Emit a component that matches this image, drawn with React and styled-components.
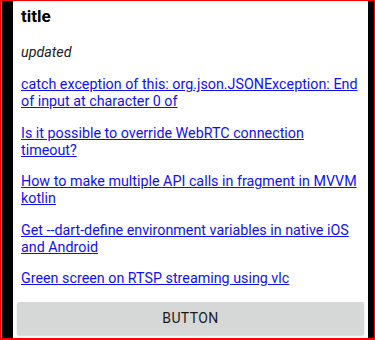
import React from "react";
import styled, { createGlobalStyle } from "styled-components";

const Global = createGlobalStyle`
  html, body { margin: 0; padding: 0; background: #fff; }
  body { font-family: Roboto, "Noto Sans", Arial, sans-serif; }
`;

const Frame = styled.div`
  box-sizing: border-box;
  width: 375px;
  height: 340px;
  border: 1px solid #ff0000;
  border-bottom-width: 2px;
  display: flex;
  overflow: hidden;
`;

const SideBar = styled.div`
  flex: none;
  width: ${(p) => p.$w}px;
  background: #000;
  border-left: ${(p) => (p.$edge ? "1px solid #777" : "none")};
`;

const Screen = styled.div`
  flex: 1;
  min-width: 0;
  background: #fff;
  display: flex;
  flex-direction: column;
  padding: 5px 4px 0;
`;

const Body = styled.div`
  padding: 0 3px 0 4px;
  display: flex;
  flex-direction: column;
`;

const Title = styled.h1`
  margin: 0 0 18px;
  font-size: 17px;
  line-height: 20px;
  font-weight: 700;
  color: #000;
`;

const Meta = styled.p`
  margin: 0 0 15px;
  font-size: 14.3px;
  line-height: 17px;
  font-style: italic;
  color: #222;
`;

const LinkPara = styled.p`
  margin: 0 0 14.5px;
  font-size: 14.3px;
  line-height: 17px;
`;

const Link = styled.a`
  color: #1010f5;
  text-decoration: underline;
  text-underline-offset: 1px;
`;

const Button = styled.button`
  height: 33px;
  width: 100%;
  border: none;
  border-radius: 2px;
  background: #d6d7d7;
  box-shadow: 0 1px 2px rgba(0, 0, 0, 0.18);
  font-family: Roboto, "Noto Sans", Arial, sans-serif;
  font-size: 14px;
  font-weight: 400;
  letter-spacing: 0.4px;
  color: #1a1a1a;
  text-transform: uppercase;
`;

const links = [
  "catch exception of this: org.json.JSONException: End of input at character 0 of",
  "Is it possible to override WebRTC connection timeout?",
  "How to make multiple API calls in fragment in MVVM kotlin",
  "Get --dart-define environment variables in native iOS and Android",
  "Green screen on RTSP streaming using vlc",
];

export default function App() {
  return (
    <>
      <Global />
      <Frame>
        <SideBar $w={11} $edge />
        <Screen>
          <Body>
            <Title>title</Title>
            <Meta>updated</Meta>
            {links.map((t) => (
              <LinkPara key={t}>
                <Link href="#">{t}</Link>
              </LinkPara>
            ))}
          </Body>
          <Button>Button</Button>
        </Screen>
        <SideBar $w={6} />
      </Frame>
    </>
  );
}
